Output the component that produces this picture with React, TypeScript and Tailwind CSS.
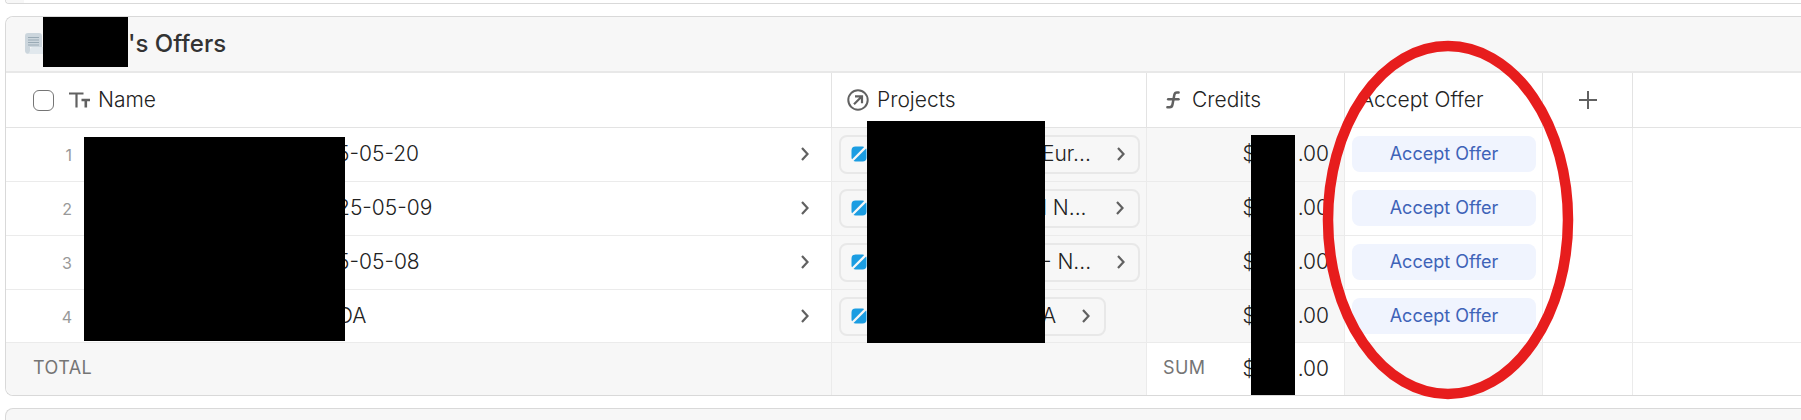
import React, { useState } from "react";

type Offer = {
  name: string;
  project: string;
};

const offers: Offer[] = [
  { name: "5-05-20", project: "Eur..." },
  { name: "25-05-09", project: "l N..." },
  { name: "5-05-08", project: "- N..." },
  { name: "OA", project: "A" },
];

const ScrollIcon = () => (
  <svg width="24" height="24" viewBox="0 0 24 24" className="shrink-0">
    <path d="M4 1h11a3 3 0 0 1 3 3v11H6v4a3 3 0 0 1-1.500 2.800A3 3 0 0 1 1 19V4a3 3 0 0 1 3-3z" fill="#ccd6dd" />
    <path d="M6 18a3 3 0 0 1 3-3h14v4a3 3 0 0 1-3 3H4a3 3 0 0 0 2-3z" fill="#e1e8ed" />
    <path d="M4 5.500h11M4 8h11M4 10.500h11M4 13h11" stroke="#99aab5" strokeWidth="1.200" />
  </svg>
);

const TextIcon = () => (
  <svg width="21" height="16" viewBox="0 0 21 16" fill="none" stroke="#616161" className="shrink-0">
    <path d="M0 1.500h14.500M7.500 1.500V15.500" strokeWidth="2.200" />
    <path d="M12.500 8h8.500M16.800 8v7.500" strokeWidth="2.600" />
  </svg>
);

const LinkedIcon = () => (
  <svg width="22" height="22" viewBox="0 0 22 22" fill="none" stroke="#616161" strokeWidth="2" className="shrink-0">
    <circle cx="11" cy="11" r="9.700" />
    <path d="M7 15.200l7.500-7.500M8 7.300h7v7" strokeWidth="2.200" />
  </svg>
);

const FormulaIcon = () => (
  <svg width="14" height="18" viewBox="0 0 14 18" fill="none" stroke="#616161" strokeWidth="2.500" strokeLinecap="round" className="shrink-0">
    <path d="M12.600 1.600h-1.600c-1.600 0-2.400.9-2.700 2.400L6.500 13.500c-.3 1.900-1.200 2.800-2.900 2.800H1.400" />
    <path d="M2.200 8.300h10.300" />
  </svg>
);

const PlusIcon = () => (
  <svg width="18" height="18" viewBox="0 0 18 18" stroke="#616161" strokeWidth="2">
    <path d="M9 0v18M0 9h18" />
  </svg>
);

const ChevronIcon = () => (
  <svg width="8" height="14" viewBox="0 0 8 14" fill="none" stroke="#616161" strokeWidth="2.200" className="shrink-0">
    <path d="M1 1l5.500 6L1 13" />
  </svg>
);

const ProjectIcon = () => (
  <svg width="16" height="16" viewBox="0 0 16 16" fill="#1b9de2" className="shrink-0">
    <path d="M4.500 0.500h7c.8 0 1.300.2 1.700.6L1.100 13.200c-.4-.4-.6-1-.6-1.700v-7a4 4 0 0 1 4-4z" />
    <path d="M15.100 2.500c.3.500.4 1 .4 2v7a4 4 0 0 1-4 4h-7c-.9 0-1.500-.1-2-.4z" />
  </svg>
);

const Redaction = ({ className }: { className: string }) => (
  <div aria-hidden="true" className={`absolute bg-black ${className}`} />
);

const Amount = () => (
  <span className="flex">
    <span>$</span>
    <span className="w-[42px]" />
    <span>.00</span>
  </span>
);

export default function App() {
  const [allSelected, setAllSelected] = useState(false);

  return (
    <div className="h-screen overflow-hidden bg-white pl-[5px] font-['Inter',sans-serif] text-[21px] leading-7 font-light text-[#222]">
      <div className="h-1 overflow-hidden rounded-bl-lg border-b border-l border-[#d9d9d9]">
        <div className="h-full w-[18px] bg-[#f7f7f7]" />
      </div>

      <section className="relative mt-3 rounded-l-lg border-y border-l border-[#d9d9d9]">
        <header className="flex h-14 items-center rounded-tl-lg border-b-2 border-[#e8e8e8] bg-[#f7f7f7] pl-[18px]">
          <ScrollIcon />
          <h2 className="pl-20 text-2xl font-medium text-[#333]">&apos;s Offers</h2>
        </header>

        <table className="w-full table-fixed border-separate border-spacing-0 text-left">
          <colgroup>
            <col className="w-[826px]" />
            <col className="w-[315px]" />
            <col className="w-[198px]" />
            <col className="w-[198px]" />
            <col className="w-[90px]" />
            <col />
          </colgroup>
          <thead>
            <tr className="h-[55px] *:border-b *:border-[#e3e3e3] *:p-0 *:font-light">
              <th className="border-r">
                <div className="flex items-center pl-[27px]">
                  <input
                    type="checkbox"
                    aria-label="Select all offers"
                    checked={allSelected}
                    onChange={(e) => setAllSelected(e.target.checked)}
                    className="size-[21px] appearance-none rounded-md border border-[#757575] bg-white checked:bg-[#3e63b8]"
                  />
                  <span className="flex items-center gap-2 pl-[15px]">
                    <TextIcon />
                    Name
                  </span>
                </div>
              </th>
              <th className="border-r">
                <div className="flex items-center gap-2 pl-[15px]">
                  <LinkedIcon />
                  Projects
                </div>
              </th>
              <th className="border-r">
                <div className="flex items-center gap-3 pl-[19px]">
                  <FormulaIcon />
                  Credits
                </div>
              </th>
              <th className="border-r">
                <div className="pl-[15px]">Accept Offer</div>
              </th>
              <th className="border-r">
                <button type="button" aria-label="Add column" className="flex w-full justify-center">
                  <PlusIcon />
                </button>
              </th>
              <th />
            </tr>
          </thead>
          <tbody>
            {offers.map((offer, index) => (
              <tr
                key={index}
                className="h-[54px] *:border-[#ebebeb] *:p-0 *:align-top last:h-[53px]"
              >
                <td className="border-r border-b">
                  <div className="flex h-[52px] items-center pr-[22px]">
                    <span className="w-[66px] pt-0.5 text-right text-base font-normal text-[#999]">{index + 1}</span>
                    <span className="flex-1 pl-[265px]">{offer.name}</span>
                    <button type="button" aria-label="Open offer">
                      <ChevronIcon />
                    </button>
                  </div>
                </td>
                <td className="border-r border-b bg-[#f7f7f7]">
                  <div className="flex h-[52px] items-center pr-1.5 pl-[7px]">
                    <button
                      type="button"
                      className={`flex h-[39px] items-center rounded-lg border-2 border-[#e8e8e8] pr-3.5 pl-2.5 text-left ${
                        offer.project.endsWith("...") ? "w-full" : ""
                      }`}
                    >
                      <ProjectIcon />
                      <span className="flex-1 pr-[26px] pl-[175px] whitespace-nowrap">{offer.project}</span>
                      <ChevronIcon />
                    </button>
                  </div>
                </td>
                <td className="border-r border-b bg-[#f7f7f7]">
                  <div className="flex h-[52px] items-center justify-end pr-[15px]">
                    <Amount />
                  </div>
                </td>
                <td className="border-r border-b">
                  <div className="flex h-[52px] items-center pr-1.5 pl-[7px]">
                    <button
                      type="button"
                      className="h-9 w-full rounded-lg bg-[#f0f4fe] text-lg font-normal text-[#3e63b8]"
                    >
                      Accept Offer
                    </button>
                  </div>
                </td>
                <td className="border-r border-b" />
                <td className={index === offers.length - 1 ? "border-b" : ""} />
              </tr>
            ))}
          </tbody>
          <tfoot>
            <tr className="h-[52px] *:border-[#ebebeb] *:p-0">
              <td className="rounded-bl-lg border-r bg-[#f7f7f7] text-lg font-normal text-[#757575]">
                <div className="pb-0.5 pl-[27px] tracking-wide">TOTAL</div>
              </td>
              <td className="border-r bg-[#f7f7f7]" />
              <td className="border-r">
                <div className="flex items-center justify-between pr-[15px] pl-4">
                  <span className="pb-0.5 text-lg font-normal tracking-wide text-[#757575]">SUM</span>
                  <Amount />
                </div>
              </td>
              <td className="border-r bg-[#f7f7f7]" />
              <td className="border-r" />
              <td />
            </tr>
          </tfoot>
        </table>

        <Redaction className="top-0 left-[37px] h-[50px] w-[85px]" />
        <Redaction className="top-[120px] left-[78px] h-[204px] w-[261px]" />
        <Redaction className="top-[104px] left-[861px] h-[222px] w-[178px]" />
        <Redaction className="top-[118px] left-[1245px] h-[260px] w-[44px]" />

        <svg
          width="252"
          height="360"
          viewBox="0 0 252 360"
          className="pointer-events-none absolute top-[23px] left-[1316px]"
        >
          <ellipse cx="126" cy="180" rx="120" ry="174" fill="none" stroke="#e71d1d" strokeWidth="10.500" />
        </svg>
      </section>

      <div className="mt-3 h-8 rounded-tl-lg border-t border-l border-[#d9d9d9] bg-[#f7f7f7]" />
    </div>
  );
}
